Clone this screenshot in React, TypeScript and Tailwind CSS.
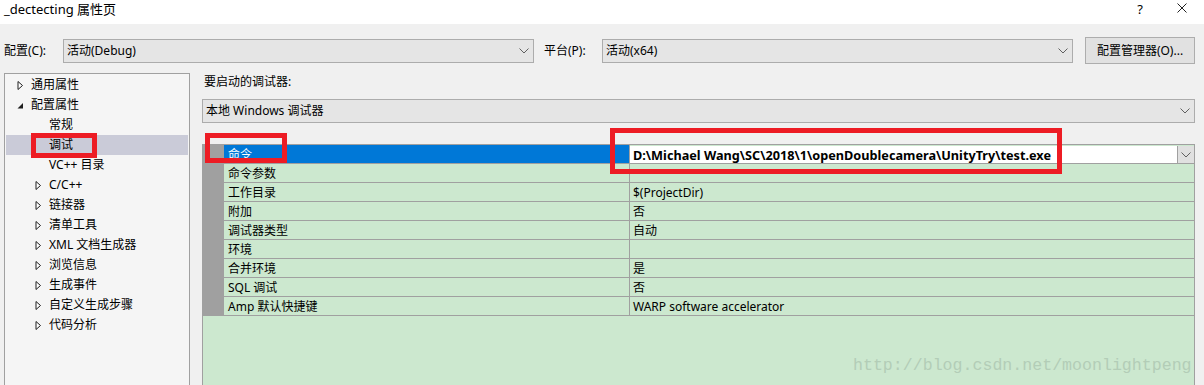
import React from 'react'

const FONT = "font-['Noto_Sans','Noto_Sans_CJK_SC',sans-serif]"

function Chevron() {
  return (
    <svg width="10" height="6" viewBox="0 0 10 6" className="shrink-0">
      <path d="M0.5 0.5 L5 5 L9.5 0.5" fill="none" stroke="#606060" strokeWidth="1" />
    </svg>
  )
}

function Combo({ text, width }: { text: string; width: string }) {
  return (
    <div className={`${width} h-[24px] flex items-center justify-between bg-[#e5e5e5] border border-[#acacac] pl-[3px] pr-[4px]`}>
      <span className="leading-[16px]">{text}</span>
      <Chevron />
    </div>
  )
}

function Collapsed() {
  return (
    <svg width="7" height="9" viewBox="0 0 7 9" className="shrink-0">
      <path d="M1 0.5 L1 8.5 L5.5 4.5 Z" fill="#fff" stroke="#1e1e1e" strokeWidth="1" />
    </svg>
  )
}

function Expanded() {
  return (
    <svg width="7" height="9" viewBox="0 0 7 9" className="shrink-0">
      <path d="M6 2 L6 7.5 L0.5 7.5 Z" fill="#1e1e1e" />
    </svg>
  )
}

type TreeItem = { label: string; level: 1 | 2; icon?: 'open' | 'closed'; selected?: boolean }

const tree: TreeItem[] = [
  { label: '通用属性', level: 1, icon: 'closed' },
  { label: '配置属性', level: 1, icon: 'open' },
  { label: '常规', level: 2 },
  { label: '调试', level: 2, selected: true },
  { label: 'VC++ 目录', level: 2 },
  { label: 'C/C++', level: 2, icon: 'closed' },
  { label: '链接器', level: 2, icon: 'closed' },
  { label: '清单工具', level: 2, icon: 'closed' },
  { label: 'XML 文档生成器', level: 2, icon: 'closed' },
  { label: '浏览信息', level: 2, icon: 'closed' },
  { label: '生成事件', level: 2, icon: 'closed' },
  { label: '自定义生成步骤', level: 2, icon: 'closed' },
  { label: '代码分析', level: 2, icon: 'closed' },
]

const rows: { name: string; value: string }[] = [
  { name: '命令参数', value: '' },
  { name: '工作目录', value: '$(ProjectDir)' },
  { name: '附加', value: '否' },
  { name: '调试器类型', value: '自动' },
  { name: '环境', value: '' },
  { name: '合并环境', value: '是' },
  { name: 'SQL 调试', value: '否' },
  { name: 'Amp 默认快捷键', value: 'WARP software accelerator' },
]

export default function App() {
  return (
    <div className={`${FONT} relative w-[1204px] h-[385px] overflow-hidden bg-[#f0f0f0] text-[12px] text-black`}>
      {/* Title bar */}
      <div className="h-[24px] bg-white flex items-center pl-[4px]">
        <span className="text-[13px] leading-[16px] -mt-[6px]">_dectecting 属性页</span>
        <span className="ml-auto text-[13px] leading-[16px] -mt-[6px]">?</span>
        <svg width="12" height="12" viewBox="0 0 12 12" className="ml-[33px] mr-[16px] -mt-[8px]">
          <path d="M1.5 1.5 L10.5 10.5 M10.5 1.5 L1.5 10.5" stroke="#222" strokeWidth="1" />
        </svg>
      </div>

      {/* Configuration row */}
      <div className="flex items-center mt-[13px] pl-[4px] h-[27px]">
        <span className="w-[59px] leading-[16px]">配置(C):</span>
        <Combo text="活动(Debug)" width="w-[471px]" />
        <span className="ml-[10px] w-[58px] leading-[16px]">平台(P):</span>
        <Combo text="活动(x64)" width="w-[471px]" />
        <button className="ml-[12px] w-[110px] h-[27px] bg-[#e1e1e1] border border-[#adadad] leading-[16px]">
          配置管理器(O)...
        </button>
      </div>

      <div className="flex mt-[9px] pl-[4px]">
        {/* Tree */}
        <div className="w-[186px] h-[320px] bg-[#f5f5f5] border border-[#a0a0a0] pt-[1px] px-[1px]">
          {tree.map((t) => (
            <div
              key={t.label}
              className={`h-[20px] flex items-center ${t.selected ? 'bg-[#cacbd8]' : ''}`}
            >
              <div className={`${t.level === 1 ? 'w-[25px] pl-[11px]' : 'w-[43px] pl-[29px]'} flex items-center`}>
                {t.icon === 'closed' && <Collapsed />}
                {t.icon === 'open' && <Expanded />}
              </div>
              <span className="leading-[16px]">{t.label}</span>
            </div>
          ))}
        </div>

        {/* Right side */}
        <div className="ml-[12px] w-[993px] flex flex-col">
          <div className="h-[18px] flex items-center pl-[2px]">
            <span className="leading-[16px]">要启动的调试器:</span>
          </div>
          <div className="mt-[8px]">
            <Combo text="本地 Windows 调试器" width="w-[993px]" />
          </div>

          {/* Property grid */}
          <div className="mt-[21px] h-[260px] bg-[#cce8cf] border-t border-x border-[#a0a0a0]">
            <div className="h-[19px] flex border-b border-[#a0a0a0]">
              <div className="w-[21px] bg-[#a0a0a0]" />
              <div className="w-[405px] bg-[#0078d7] text-white pl-[4px] pt-[1px] flex items-center">
                <span className="leading-[16px]">命令</span>
              </div>
              <div className="flex-1 flex border-l border-[#a0a0a0] bg-[#cce8cf]">
                <div className="flex-1 bg-white mt-[1px] pl-[3px] pt-[1px] flex items-center">
                  <span className="leading-[16px] font-bold text-[12.7px]">D:\Michael Wang\SC\2018\1\openDoublecamera\UnityTry\test.exe</span>
                </div>
                <div className="w-[17px] mt-[1px] bg-[#e0e0e0] border-l border-[#a0a0a0] flex items-center justify-center">
                  <Chevron />
                </div>
              </div>
            </div>
            {rows.map((r) => (
              <div key={r.name} className="h-[19px] flex border-b border-[#a0a0a0]">
                <div className="w-[21px] bg-[#a0a0a0]" />
                <div className="w-[405px] pl-[4px] pt-[1px] flex items-center">
                  <span className="leading-[16px]">{r.name}</span>
                </div>
                <div className="flex-1 border-l border-[#a0a0a0] pl-[3px] pt-[1px] flex items-center">
                  <span className="leading-[16px]">{r.value}</span>
                </div>
              </div>
            ))}
          </div>
        </div>
      </div>

      {/* Annotation boxes */}
      <div className="absolute left-[31px] top-[133px] w-[66px] h-[25px] border-[5px] border-[#ed1c24]" />
      <div className="absolute left-[205px] top-[133px] w-[82px] h-[30px] border-[5px] border-[#ed1c24]" />
      <div className="absolute left-[610px] top-[128px] w-[452px] h-[46px] border-[5px] border-[#ed1c24]" />

      {/* Watermark */}
      <div className="absolute left-[853px] top-[355px] font-['Liberation_Mono',monospace] text-[16.6px] leading-[22px] text-[#b3cdb7]">
        http://blog.csdn.net/moonlightpeng
      </div>
    </div>
  )
}
